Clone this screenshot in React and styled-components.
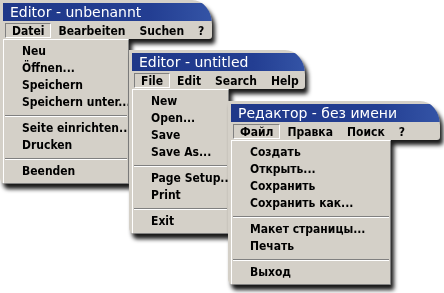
import React from 'react'
import styled, { createGlobalStyle } from 'styled-components'

const Global = createGlobalStyle`
  html, body { margin: 0; padding: 0; background: #fff; }
  body { overflow: hidden; }
`

const Desktop = styled.div`
  position: relative;
  width: 444px;
  height: 293px;
  background: #fff;
  overflow: hidden;
  font-family: "DejaVu Sans Condensed", "DejaVu Sans", sans-serif;
  font-stretch: condensed;
`

const Window = styled.div`
  position: absolute;
  left: ${p => p.x}px;
  top: ${p => p.y}px;
  display: flex;
  flex-direction: column;
  align-items: flex-start;
  filter: drop-shadow(3px 5px 2px rgba(0, 0, 0, 0.9));
`

const Head = styled.div`
  width: ${p => p.w}px;
  box-sizing: border-box;
  padding: 3px 0 0 3px;
  background: #d4d0c8;
  border-top-right-radius: 20px 24px;
  border-bottom-right-radius: 3px;
  overflow: hidden;
`

const TitleBar = styled.div`
  height: 18px;
  line-height: 18px;
  padding-left: 7px;
  color: #fff;
  font-family: "DejaVu Sans", sans-serif;
  font-stretch: normal;
  font-size: 14px;
  white-space: nowrap;
  background: linear-gradient(90deg, #1f3889 0%, #233e92 70%, #3454a6 100%);
`

const MenuBar = styled.div`
  display: flex;
  height: 18px;
  box-sizing: border-box;
  padding: 2px 2px 1px 2px;
`

const MenuTitle = styled.div`
  height: 15px;
  line-height: 14px;
  box-sizing: border-box;
  padding: 0 6px;
  font-size: 12px;
  font-weight: bold;
  color: #000;
  white-space: nowrap;
  border: 1px solid transparent;
  ${p => p.open && `
    border-color: #808080 #fff #fff #808080;
  `}
`

const Body = styled.div`
  width: ${p => p.w}px;
  box-sizing: border-box;
  padding-left: 3px;
  background: #d4d0c8;
  border-bottom-left-radius: 6px;
  border-bottom-right-radius: 2px;
  overflow: hidden;
`

const Dropdown = styled.div`
  display: flex;
  flex-direction: column;
  padding: 3px 0;
  border-top: 1px solid #fff;
  border-left: 1px solid #fff;
  border-right: 1px solid #808080;
  border-bottom: 1px solid #808080;
  overflow: hidden;
`

const Item = styled.div`
  height: 17px;
  line-height: 17px;
  padding-left: 18px;
  font-size: 12px;
  font-weight: bold;
  color: #000;
  white-space: nowrap;
`

const Separator = styled.div`
  height: 9px;
  display: flex;
  align-items: center;
  &::before {
    content: '';
    flex: 1;
    margin: 0 1px;
    height: 0;
    border-top: 1px solid #808080;
    border-bottom: 1px solid #fff;
  }
`

const windows = [
  {
    x: 0, y: 0, head: 212, body: 129,
    title: 'Editor - unbenannt',
    menus: ['Datei', 'Bearbeiten', 'Suchen', '?'],
    items: [['Neu', 'Öffnen...', 'Speichern', 'Speichern unter...'], ['Seite einrichten...', 'Drucken'], ['Beenden']],
  },
  {
    x: 129, y: 50, head: 176, body: 100,
    title: 'Editor - untitled',
    menus: ['File', 'Edit', 'Search', 'Help'],
    items: [['New', 'Open...', 'Save', 'Save As...'], ['Page Setup...', 'Print'], ['Exit']],
  },
  {
    x: 228, y: 101, head: 212, body: 163,
    title: 'Редактор - без имени',
    menus: ['Файл', 'Правка', 'Поиск', '?'],
    items: [['Создать', 'Открыть...', 'Сохранить', 'Сохранить как...'], ['Макет страницы...', 'Печать'], ['Выход']],
  },
]

const EditorWindow = ({ win }) => (
  <Window x={win.x} y={win.y}>
    <Head w={win.head}>
      <TitleBar>{win.title}</TitleBar>
      <MenuBar>
        {win.menus.map((m, i) => (
          <MenuTitle key={m} open={i === 0}>{m}</MenuTitle>
        ))}
      </MenuBar>
    </Head>
    <Body w={win.body}>
      <Dropdown>
        {win.items.map((group, g) => (
          <React.Fragment key={g}>
            {g > 0 && <Separator />}
            {group.map(label => <Item key={label}>{label}</Item>)}
          </React.Fragment>
        ))}
      </Dropdown>
    </Body>
  </Window>
)

export default function App() {
  return (
    <Desktop>
      <Global />
      {windows.map(w => <EditorWindow key={w.title} win={w} />)}
    </Desktop>
  )
}
